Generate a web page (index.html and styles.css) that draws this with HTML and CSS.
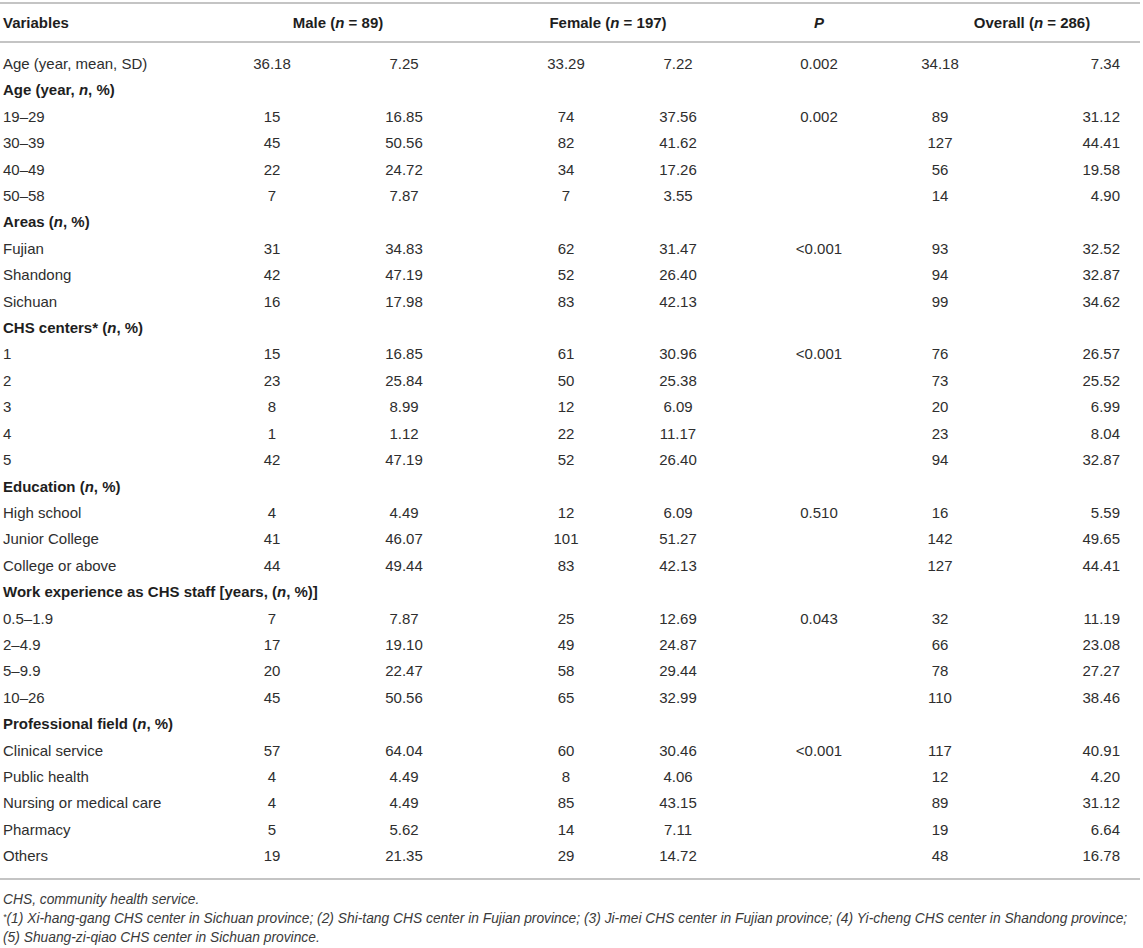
FILE: index.html
```html
<!DOCTYPE html>
<html lang="en">
<head>
<meta charset="utf-8">
<title>Table</title>
<link rel="stylesheet" href="styles.css">
</head>
<body>
<div class="wrap">
<table class="data">
<colgroup>
<col class="c0"><col class="c1"><col class="c2"><col class="c3"><col class="c4"><col class="c5"><col class="c6"><col class="c7">
</colgroup>
<thead>
<tr>
<th class="lab">Variables</th>
<th colspan="2">Male (<i>n</i> = 89)</th>
<th colspan="2" class="fe">Female (<i>n</i> = 197)</th>
<th><i>P</i></th>
<th colspan="2" class="ov">Overall (<i>n</i> = 286)</th>
</tr>
</thead>
<tbody>
<tr class="first"><td class="lab">Age (year, mean, SD)</td><td>36.18</td><td>7.25</td><td class="fn">33.29</td><td>7.22</td><td>0.002</td><td>34.18</td><td class="last">7.34</td></tr>
<tr class="sec"><td colspan="8">Age (year, <i>n</i>, %)</td></tr>
<tr><td class="lab">19–29</td><td>15</td><td>16.85</td><td class="fn">74</td><td>37.56</td><td>0.002</td><td>89</td><td class="last">31.12</td></tr>
<tr><td class="lab">30–39</td><td>45</td><td>50.56</td><td class="fn">82</td><td>41.62</td><td></td><td>127</td><td class="last">44.41</td></tr>
<tr><td class="lab">40–49</td><td>22</td><td>24.72</td><td class="fn">34</td><td>17.26</td><td></td><td>56</td><td class="last">19.58</td></tr>
<tr><td class="lab">50–58</td><td>7</td><td>7.87</td><td class="fn">7</td><td>3.55</td><td></td><td>14</td><td class="last">4.90</td></tr>
<tr class="sec"><td colspan="8">Areas (<i>n</i>, %)</td></tr>
<tr><td class="lab">Fujian</td><td>31</td><td>34.83</td><td class="fn">62</td><td>31.47</td><td>&lt;0.001</td><td>93</td><td class="last">32.52</td></tr>
<tr><td class="lab">Shandong</td><td>42</td><td>47.19</td><td class="fn">52</td><td>26.40</td><td></td><td>94</td><td class="last">32.87</td></tr>
<tr><td class="lab">Sichuan</td><td>16</td><td>17.98</td><td class="fn">83</td><td>42.13</td><td></td><td>99</td><td class="last">34.62</td></tr>
<tr class="sec"><td colspan="8">CHS centers* (<i>n</i>, %)</td></tr>
<tr><td class="lab">1</td><td>15</td><td>16.85</td><td class="fn">61</td><td>30.96</td><td>&lt;0.001</td><td>76</td><td class="last">26.57</td></tr>
<tr><td class="lab">2</td><td>23</td><td>25.84</td><td class="fn">50</td><td>25.38</td><td></td><td>73</td><td class="last">25.52</td></tr>
<tr><td class="lab">3</td><td>8</td><td>8.99</td><td class="fn">12</td><td>6.09</td><td></td><td>20</td><td class="last">6.99</td></tr>
<tr><td class="lab">4</td><td>1</td><td>1.12</td><td class="fn">22</td><td>11.17</td><td></td><td>23</td><td class="last">8.04</td></tr>
<tr><td class="lab">5</td><td>42</td><td>47.19</td><td class="fn">52</td><td>26.40</td><td></td><td>94</td><td class="last">32.87</td></tr>
<tr class="sec"><td colspan="8">Education (<i>n</i>, %)</td></tr>
<tr><td class="lab">High school</td><td>4</td><td>4.49</td><td class="fn">12</td><td>6.09</td><td>0.510</td><td>16</td><td class="last">5.59</td></tr>
<tr><td class="lab">Junior College</td><td>41</td><td>46.07</td><td class="fn">101</td><td>51.27</td><td></td><td>142</td><td class="last">49.65</td></tr>
<tr><td class="lab">College or above</td><td>44</td><td>49.44</td><td class="fn">83</td><td>42.13</td><td></td><td>127</td><td class="last">44.41</td></tr>
<tr class="sec"><td colspan="8">Work experience as CHS staff [years, (<i>n</i>, %)]</td></tr>
<tr><td class="lab">0.5–1.9</td><td>7</td><td>7.87</td><td class="fn">25</td><td>12.69</td><td>0.043</td><td>32</td><td class="last">11.19</td></tr>
<tr><td class="lab">2–4.9</td><td>17</td><td>19.10</td><td class="fn">49</td><td>24.87</td><td></td><td>66</td><td class="last">23.08</td></tr>
<tr><td class="lab">5–9.9</td><td>20</td><td>22.47</td><td class="fn">58</td><td>29.44</td><td></td><td>78</td><td class="last">27.27</td></tr>
<tr><td class="lab">10–26</td><td>45</td><td>50.56</td><td class="fn">65</td><td>32.99</td><td></td><td>110</td><td class="last">38.46</td></tr>
<tr class="sec"><td colspan="8">Professional field (<i>n</i>, %)</td></tr>
<tr><td class="lab">Clinical service</td><td>57</td><td>64.04</td><td class="fn">60</td><td>30.46</td><td>&lt;0.001</td><td>117</td><td class="last">40.91</td></tr>
<tr><td class="lab">Public health</td><td>4</td><td>4.49</td><td class="fn">8</td><td>4.06</td><td></td><td>12</td><td class="last">4.20</td></tr>
<tr><td class="lab">Nursing or medical care</td><td>4</td><td>4.49</td><td class="fn">85</td><td>43.15</td><td></td><td>89</td><td class="last">31.12</td></tr>
<tr><td class="lab">Pharmacy</td><td>5</td><td>5.62</td><td class="fn">14</td><td>7.11</td><td></td><td>19</td><td class="last">6.64</td></tr>
<tr class="final"><td class="lab">Others</td><td>19</td><td>21.35</td><td class="fn">29</td><td>14.72</td><td></td><td>48</td><td class="last">16.78</td></tr>
</tbody>
</table>
<div class="notes">
<p>CHS, community health service.</p>
<p><span class="ast">*</span>(1) Xi-hang-gang CHS center in Sichuan province; (2) Shi-tang CHS center in Fujian province; (3) Ji-mei CHS center in Fujian province; (4) Yi-cheng CHS center in Shandong province;<br>(5) Shuang-zi-qiao CHS center in Sichuan province.</p>
</div>
</div>
</body>
</html>
```

FILE: styles.css
```css
html, body {
  margin: 0;
  padding: 0;
  background: #ffffff;
}

body {
  font-family: "Liberation Sans", Arial, Helvetica, sans-serif;
  color: #2e2e2e;
}

.wrap {
  width: 1140px;
  padding-top: 2px;
}

.data {
  width: 1140px;
  border-collapse: collapse;
  table-layout: fixed;
  font-size: 15px;
}

.c0 { width: 206px; }
.c1 { width: 132px; }
.c2 { width: 132px; }
.c3 { width: 152px; }
.c4 { width: 112px; }
.c5 { width: 170px; }
.c6 { width: 72px; }
.c7 { width: 164px; }

.data thead th {
  border-top: 2px solid #c4c4c4;
  border-bottom: 2px solid #c4c4c4;
  height: 37px;
  padding: 0;
  font-weight: bold;
  color: #1e1e1e;
  text-align: center;
  vertical-align: middle;
}

.data thead th.lab {
  text-align: left;
  padding-left: 3px;
}

.data thead th.fe {
  padding-left: 12px;
}

.data thead th.ov {
  padding-left: 20px;
}

.data td {
  padding: 0;
  line-height: 26.4px;
  text-align: center;
  white-space: nowrap;
}

.data td.lab {
  text-align: left;
  padding-left: 3px;
}

.data td.fn {
  padding-left: 40px;
}

.data td.last {
  text-align: right;
  padding-right: 20px;
}

.data tr.sec td {
  text-align: left;
  padding-left: 3px;
  font-weight: bold;
  color: #1e1e1e;
}

.data tr.first td {
  padding-top: 8px;
}

.data tr.final td {
  padding-bottom: 8px;
  border-bottom: 2px solid #c4c4c4;
}

.notes {
  padding: 10px 0 0 3px;
  font-size: 13.8px;
  font-style: italic;
  color: #3a3a3a;
  line-height: 19px;
}

.notes p {
  margin: 0;
}

.ast {
  font-size: 9px;
  line-height: 0;
  vertical-align: 3px;
}
```
